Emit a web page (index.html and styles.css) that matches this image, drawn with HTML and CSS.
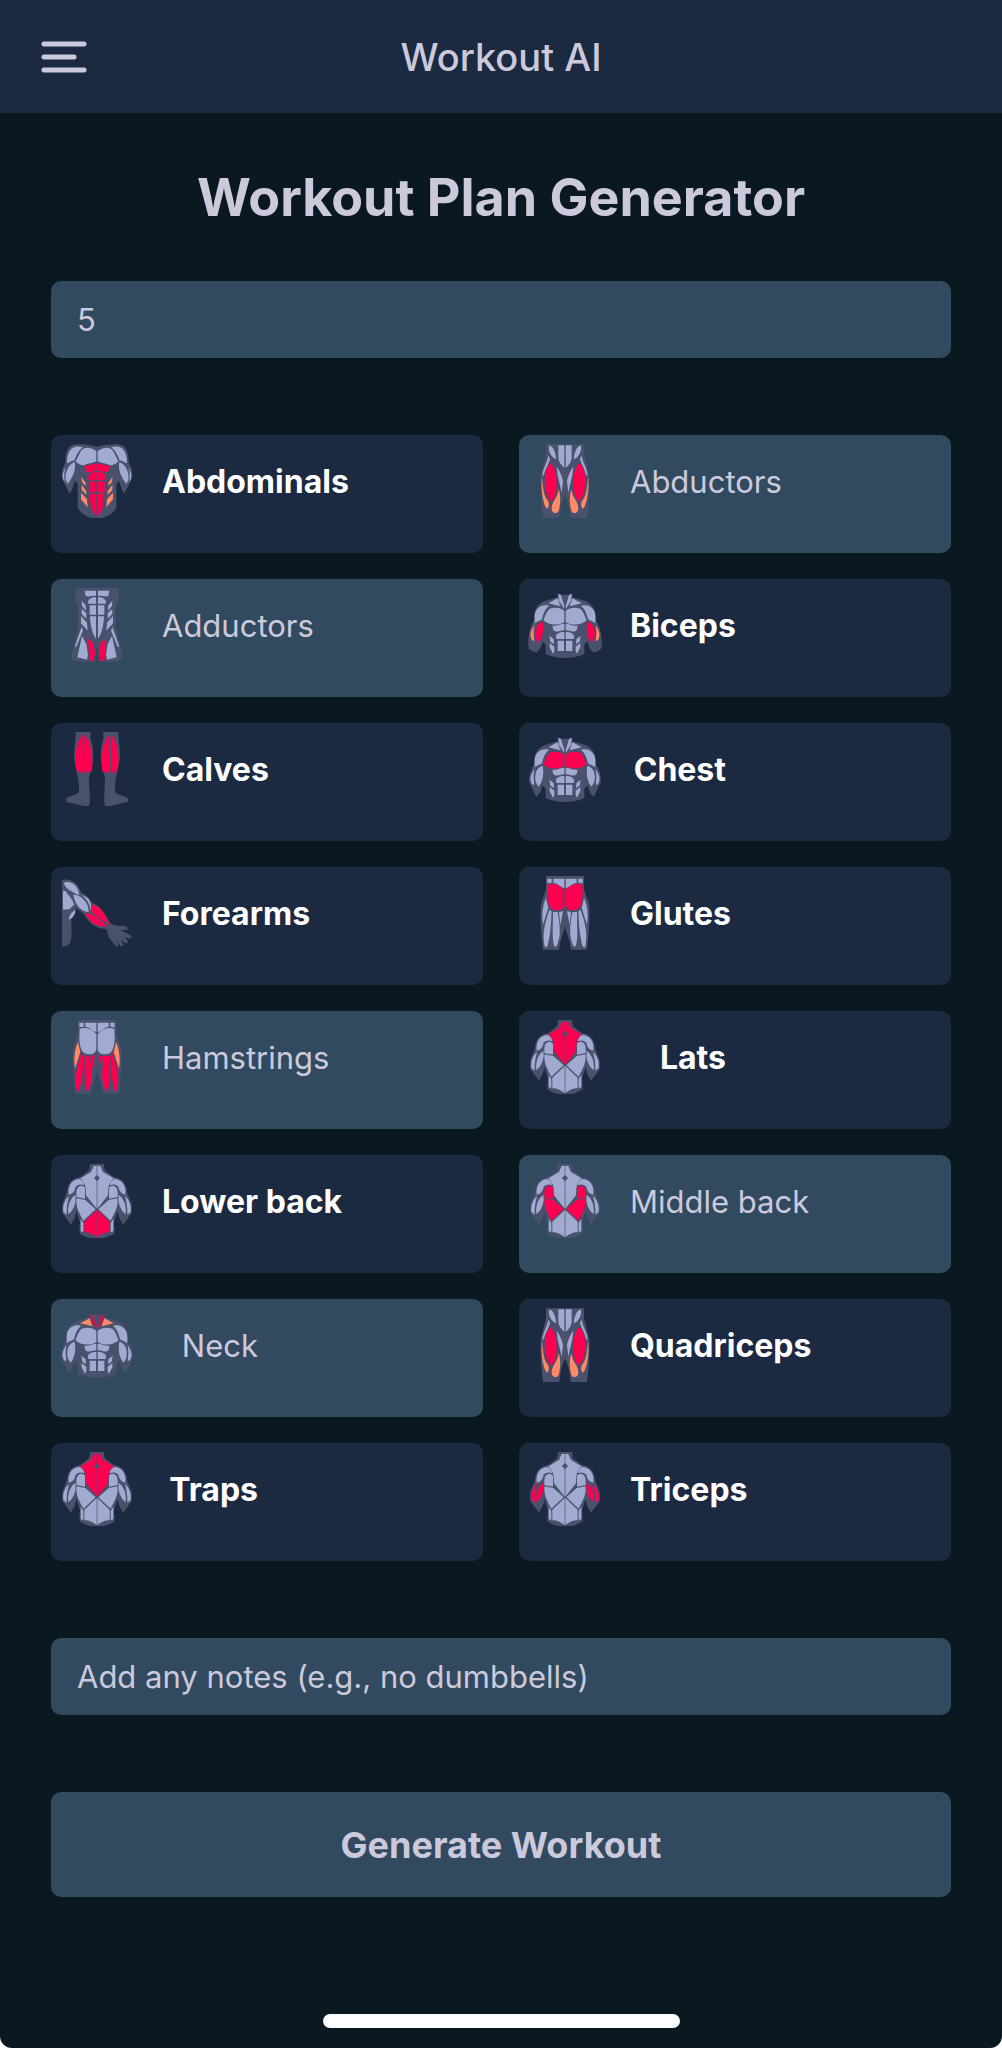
FILE: index.html
```html
<!DOCTYPE html>
<html lang="en">
<head>
<meta charset="utf-8">
<meta name="viewport" content="width=device-width, initial-scale=1">
<title>Workout AI</title>
<link rel="stylesheet" href="styles.css">
</head>
<body>
<svg class="sprite" width="0" height="0" aria-hidden="true">
  <defs>
    <!-- Each figure is drawn as its right half and mirrored. -->
    <g id="front-half">
      <path class="base" d="M0 20 L16 20 L23 14 L21 27 L50 36 C78 42 94 60 93 98 C106 118 110 138 106 154 L86 195 L74 180 L68 160 L58 170 V199 Q30 210 0 210Z"/>
      <path class="base arm" d="M68 110 L100 116 C112 140 112 170 108 184 L92 193 L76 184 L66 160Z"/>
      <path class="neck" d="M20 18 L12 21 L2 54 L3 62 L18 38Z"/>
      <path class="shoulder" d="M22 31 L50 46 L14 55Z"/>
      <path class="pec" d="M2 70 C8 60 28 56 46 62 C57 72 60 86 65 97 C50 112 20 114 2 102Z"/>
      <path class="delt" d="M48 53 C75 46 91 65 91 85 V106 C84 100 74 98 69 94 C65 76 60 64 48 53Z"/>
      <path class="biceps" d="M67 101 C84 106 93 122 88 150 L80 164 C68 152 62 126 67 101Z"/>
      <path class="brachialis" d="M91 110 C106 130 107 146 97 158 L92 158 C95 138 95 124 91 110Z"/>
      <path class="abs" d="M2 107 C14 107 24 116 38 113 L35 126 C24 136 12 126 2 127Z M2 132 C12 130 26 137 27 143 L26 153 H2Z M3 158 H22 V189 H3Z"/>
      <path class="oblique" d="M34 154 L47 143 L44 161 L33 168Z M32 176 L46 165 V178 L36 197 L32 190Z"/>
    </g>
    <g id="front"><use href="#front-half"/><use href="#front-half" transform="scale(-1 1)"/></g>

    <g id="abdomen-half">
      <path class="base" d="M0 8 C30 0 60 -2 78 5 C94 15 95 40 95 55 C108 80 108 100 101 112 L82 149 L74 135 L66 110 L58 120 L58 190 C50 212 20 224 0 224Z"/>
      <path class="pec" d="M2 22 C16 10 36 8 46 18 C54 28 58 42 64 52 C56 62 44 66 36 62 C26 58 14 58 2 52Z"/>
      <path class="delt" d="M42 10 C74 0 91 20 90 58 C80 54 74 48 68 50 C62 34 56 20 42 10Z"/>
      <path class="biceps" d="M67 55 C84 58 98 86 94 108 L88 120 C74 100 62 80 67 55Z"/>
      <path class="brachialis" d="M94 70 C106 88 105 104 97 114 C99 98 99 84 94 70Z"/>
      <path class="abs" d="M1 58 C14 60 26 66 38 66 L34 82 C24 90 12 80 1 80Z M1 84 C12 82 26 90 26 96 L25 108 H1Z M2 112 H23 V145 H2Z M2 149 H22 C22 180 14 208 2 215Z"/>
      <path class="oblique" d="M34 116 L47 98 L45 114 L34 126Z M32 142 L46 122 V138 L32 152Z M30 166 L48 146 V166 L28 190Z"/>
    </g>
    <g id="abdomen"><use href="#abdomen-half"/><use href="#abdomen-half" transform="scale(-1 1)"/></g>

    <g id="back-half">
      <path class="base" d="M0 0 H21 L23 18 L48 38 C75 42 90 60 90 85 L104 120 V148 L78 182 L66 160 L62 140 L51 175 L53 207 C40 218 20 224 0 224Z"/>
      <path class="traps" d="M1 5 L10 6 L18 24 L50 43 C42 50 36 60 34 72 L33 94 L1 134Z"/>
      <path class="delt" d="M52 45 C74 46 88 62 85 92 C76 90 68 86 64 68 C56 60 46 60 38 64 C40 52 46 48 52 45Z"/>
      <path class="rear" d="M36 71 C44 60 60 64 62 84 V99 L36 104Z"/>
      <path class="lats" d="M35 108 L61 103 C66 125 52 150 41 170 L4 136Z"/>
      <path class="triceps" d="M65 93 C76 100 90 120 86 150 C78 146 60 124 65 93Z M84 96 C96 106 104 124 101 144 L91 152 C92 130 88 112 84 96Z"/>
      <path class="lower" d="M1 138 L38 173 V205 C26 204 14 210 1 219Z"/>
      <path class="flank" d="M41 177 L49 164 V202 L41 204Z"/>
      <path class="base" d="M0 33 L9 42 L0 52Z"/>
    </g>
    <g id="back"><use href="#back-half"/><use href="#back-half" transform="scale(-1 1)"/></g>

    <g id="thigh-half">
      <path class="base" d="M0 1 H57 V30 L73 95 C75 140 71 180 66 222 H17 C14 190 8 165 0 152Z"/>
      <path class="hip" d="M2 4 H20 V38 C20 54 12 62 2 71Z M47 4 C52 20 42 40 27 46 C26 30 34 8 47 4Z M50 34 C52 56 66 70 68 96 L63 92 C58 70 46 55 45 44Z M25 68 L22 94 L10 146 L6 112 C10 88 20 76 25 68Z"/>
      <path class="quad" d="M43 57 C56 68 62 90 60 120 C58 150 50 162 43 172 C32 168 24 144 25 112 C26 82 34 66 43 57Z"/>
      <path class="vastus" d="M19 136 C22 162 40 172 40 194 C40 210 21 212 18 198 C12 170 14 150 19 136Z M70 98 C72 140 66 180 55 194 C46 190 46 176 55 165 C66 150 66 120 70 98Z"/>
    </g>
    <g id="thighs"><use href="#thigh-half"/><use href="#thigh-half" transform="scale(-1 1)"/></g>

    <g id="groin-half">
      <path class="base" d="M0 0 H65 V40 L56 60 V118 L76 200 L73 216 L40 222 L8 220 L0 172Z"/>
      <path class="abs" d="M3 8 H37 L34 24 C24 28 12 22 3 24Z M3 28 C12 26 26 32 27 42 L26 47 H3Z M3 52 H22 V80 H3Z M3 85 H21 C20 118 12 140 3 152Z"/>
      <path class="oblique" d="M34 52 L46 38 L45 54 L33 68Z M32 76 L46 62 V78 L32 92Z M30 104 L48 84 V106 L28 128Z M46 116 L67 176 L62 176 L42 128Z"/>
      <path class="adductor" d="M27 152 L25 185 L22 218 L10 220 L6 196 L11 166Z"/>
      <path class="outer" d="M45 144 L59 208 L30 215 L27 200 L32 168Z"/>
    </g>
    <g id="groin"><use href="#groin-half"/><use href="#groin-half" transform="scale(-1 1)"/></g>

    <g id="calf-half">
      <path class="base" d="M18 0 H64 C62 20 71 50 68 80 C65 112 52 140 54 180 C62 190 90 194 93 200 V209 L40 222 H26 Q20 220 22 190 L24 134 C8 90 8 50 20 20Z"/>
      <path class="calf" d="M38 8 C16 26 10 85 16 120 L24 116 L30 126 L39 116Z M43 8 C64 28 70 85 60 120 L52 116 L47 126 L41 116Z"/>
    </g>
    <g id="calves"><use href="#calf-half"/><use href="#calf-half" transform="scale(-1 1)"/></g>

    <g id="seat-half">
      <path class="base" d="M0 0 H57 V40 L72 84 C76 130 70 180 66 221 H18 C14 190 6 175 0 150Z"/>
      <path class="waist" d="M2 8 H35 V20 C20 22 14 34 2 36Z M40 8 H53 V22 L40 20Z"/>
      <path class="glute" d="M2 42 C18 24 36 22 52 26 L53 60 C50 86 46 103 24 103 C8 103 2 94 2 86Z"/>
      <path class="ham" d="M6 106 L18 108 L14 146Z M22 108 H36 L37 170 C36 212 30 218 24 208 C12 180 14 150 22 108Z M40 106 L47 102 C60 140 68 170 62 206 C60 216 54 216 52 208 C42 170 42 140 40 106Z"/>
      <path class="band" d="M50 96 L57 66 C68 90 70 120 66 146Z"/>
    </g>
    <g id="seat"><use href="#seat-half"/><use href="#seat-half" transform="scale(-1 1)"/></g>

    <g id="forearm">
      <path class="base" d="M6 12 C35 5 55 25 64 50 C82 58 92 70 96 80 C125 88 138 122 152 143 C166 150 178 150 196 150 Q206 154 202 162 L180 162 L212 178 Q218 186 208 188 L194 182 L204 196 Q204 206 194 200 L182 190 L190 206 Q188 216 180 208 L168 192 L176 208 Q172 216 164 206 L146 184 L140 160 C110 158 86 142 72 114 L48 96 L34 130 C34 160 38 190 28 204 Q20 212 6 212Z"/>
      <path class="muscle" d="M11 20 C36 12 56 32 58 58 C46 50 18 44 11 20Z M9 45 L17 45 C26 62 38 66 42 86 L28 100 L9 101Z M40 56 C62 56 88 78 86 108 C68 108 46 92 40 56Z M64 58 C88 62 98 84 92 104 C90 84 80 68 64 58Z M46 102 C48 115 36 130 26 131 C28 116 36 108 46 102Z"/>
      <path class="hot" d="M96 86 C120 86 140 122 148 146 C134 136 114 126 92 106Z M77 113 C98 108 116 130 144 151 C112 154 90 142 77 113Z"/>
    </g>
  </defs>
</svg>

<div class="app">
  <header class="topbar">
    <button class="menu" type="button" aria-label="Open menu">
      <svg viewBox="0 0 46 32" width="46" height="32" fill="none" stroke="currentColor" stroke-width="5" stroke-linecap="round"><path d="M3 3H43M3 16H33M3 29H43"/></svg>
    </button>
    <p class="brand">Workout AI</p>
  </header>

  <main class="content">
    <h1 class="title">Workout Plan Generator</h1>
    <form class="form">
      <input class="field" type="text" inputmode="numeric" value="5" aria-label="Number of exercises">

      <div class="muscles" role="group" aria-label="Muscle groups">
        <button class="card on" type="button" aria-pressed="true"><svg class="icon hit-abs" viewBox="-111 0 222 222"><use href="#abdomen"/></svg><span class="name">Abdominals</span></button>
        <button class="card" type="button" aria-pressed="false"><svg class="icon hit-quads" viewBox="-111 0 222 222"><use href="#thighs"/></svg><span class="name">Abductors</span></button>
        <button class="card" type="button" aria-pressed="false"><svg class="icon hit-adductors" viewBox="-111 0 222 222"><use href="#groin"/></svg><span class="name">Adductors</span></button>
        <button class="card on" type="button" aria-pressed="true"><svg class="icon hit-biceps" viewBox="-111 0 222 222"><use href="#front"/></svg><span class="name">Biceps</span></button>
        <button class="card on" type="button" aria-pressed="true"><svg class="icon hit-calves" viewBox="-111 0 222 222"><use href="#calves"/></svg><span class="name">Calves</span></button>
        <button class="card on" type="button" aria-pressed="true"><svg class="icon hit-chest" viewBox="-111 0 222 222"><use href="#front"/></svg><span class="name">Chest</span></button>
        <button class="card on" type="button" aria-pressed="true"><svg class="icon" viewBox="0 0 222 222"><use href="#forearm"/></svg><span class="name">Forearms</span></button>
        <button class="card on" type="button" aria-pressed="true"><svg class="icon hit-glutes" viewBox="-111 0 222 222"><use href="#seat"/></svg><span class="name">Glutes</span></button>
        <button class="card" type="button" aria-pressed="false"><svg class="icon hit-hamstrings" viewBox="-111 0 222 222"><use href="#seat"/></svg><span class="name">Hamstrings</span></button>
        <button class="card on" type="button" aria-pressed="true"><svg class="icon hit-traps" viewBox="-111 0 222 222"><use href="#back"/></svg><span class="name">Lats</span></button>
        <button class="card on" type="button" aria-pressed="true"><svg class="icon hit-lower" viewBox="-111 0 222 222"><use href="#back"/></svg><span class="name">Lower back</span></button>
        <button class="card" type="button" aria-pressed="false"><svg class="icon hit-middle" viewBox="-111 0 222 222"><use href="#back"/></svg><span class="name">Middle back</span></button>
        <button class="card" type="button" aria-pressed="false"><svg class="icon hit-neck" viewBox="-111 0 222 222"><use href="#front"/></svg><span class="name">Neck</span></button>
        <button class="card on" type="button" aria-pressed="true"><svg class="icon hit-quads" viewBox="-111 0 222 222"><use href="#thighs"/></svg><span class="name">Quadriceps</span></button>
        <button class="card on" type="button" aria-pressed="true"><svg class="icon hit-traps" viewBox="-111 0 222 222"><use href="#back"/></svg><span class="name">Traps</span></button>
        <button class="card on" type="button" aria-pressed="true"><svg class="icon hit-triceps" viewBox="-111 0 222 222"><use href="#back"/></svg><span class="name">Triceps</span></button>
      </div>

      <input class="field" type="text" placeholder="Add any notes (e.g., no dumbbells)" aria-label="Notes">
      <button class="submit" type="submit">Generate Workout</button>
    </form>
  </main>
  <div class="home-indicator"></div>
</div>
</body>
</html>
```
FILE: styles.css
```css
:root {
  --bg: #0a1820;
  --navy: #1b2a41;
  --slate: #324a5f;
  --text: #ccc9dc;
  --muscle: #a1abd1;
  --base: #4a516c;
  --hot: #ff0051;
  --warm: #ff8a65;
}

* { box-sizing: border-box; }

html { background: #fff; }

body {
  margin: 0;
  font-family: Inter, "Liberation Sans", sans-serif;
  font-size: 31px;
  color: var(--text);
}

button, input { font: inherit; color: inherit; border: 0; }
button { cursor: pointer; }

.sprite { position: absolute; }

.app {
  display: flex;
  flex-direction: column;
  min-height: 100vh;
  padding-bottom: 20px;
  background: var(--bg);
  border-radius: 0 0 12px 12px;
}

.topbar {
  display: grid;
  grid-template-columns: 1fr auto 1fr;
  align-items: center;
  height: 113px;
  padding: 0 41px;
  background: var(--navy);
}

.menu {
  justify-self: start;
  display: flex;
  padding: 0;
  background: none;
}

.brand {
  margin: 0;
  font-size: 38px;
  font-weight: 500;
}

.content { padding: 53px 51px 77px; }

.title {
  margin: 0 0 51px;
  font-size: 52px;
  line-height: 64px;
  font-weight: 700;
  text-align: center;
}

.form {
  display: flex;
  flex-direction: column;
  gap: 77px;
}

.field {
  width: 100%;
  height: 77px;
  padding: 0 26px;
  border-radius: 10px;
  background: var(--slate);
}

.field::placeholder { color: inherit; opacity: 1; }

.muscles {
  display: grid;
  grid-template-columns: 1fr 1fr;
  gap: 26px 36px;
}

.card {
  display: flex;
  align-items: center;
  gap: 28px;
  padding: 9px 9px 35px;
  border-radius: 10px;
  background: var(--slate);
}

.card.on {
  background: var(--navy);
  color: #fff;
  font-size: 32px;
  font-weight: 700;
}

.icon { flex: none; width: 74px; height: 74px; }

.name { min-width: 96px; text-align: right; }

.submit {
  height: 105px;
  border-radius: 10px;
  background: var(--slate);
  font-size: 36px;
  font-weight: 700;
}

.home-indicator {
  width: 357px;
  height: 14px;
  margin: auto auto 0;
  border-radius: 7px;
  background: #fff;
}

/* Muscle figures: every part is neutral until its icon highlights it. */
.icon { fill: var(--muscle); }
.base { fill: var(--base); }
.hot { fill: var(--hot); }
.arm { display: var(--arm, none); }
.neck { fill: var(--neck, var(--muscle)); }
.shoulder { fill: var(--shoulder, var(--muscle)); }
.pec { fill: var(--pec, var(--muscle)); }
.biceps { fill: var(--biceps, var(--muscle)); }
.brachialis { fill: var(--brachialis, var(--muscle)); }
.abs { fill: var(--abs, var(--muscle)); }
.oblique { fill: var(--oblique, var(--muscle)); }
.traps { fill: var(--traps, var(--muscle)); }
.rear, .lats { fill: var(--middle, var(--muscle)); }
.triceps { fill: var(--triceps, var(--muscle)); }
.lower { fill: var(--lower, var(--muscle)); }
.quad { fill: var(--quad, var(--muscle)); }
.vastus { fill: var(--vastus, var(--muscle)); }
.adductor { fill: var(--adductor, var(--muscle)); }
.calf { fill: var(--calf, var(--muscle)); }
.glute { fill: var(--glute, var(--muscle)); }
.ham { fill: var(--ham, var(--muscle)); }
.band { fill: var(--band, var(--muscle)); }

.hit-abs { --abs: var(--hot); --oblique: var(--warm); }
.hit-quads { --quad: var(--hot); --vastus: var(--warm); }
.hit-adductors { --adductor: var(--hot); }
.hit-biceps { --biceps: var(--hot); --brachialis: var(--warm); --arm: inline; }
.hit-calves { --calf: var(--hot); }
.hit-chest { --pec: var(--hot); }
.hit-glutes { --glute: var(--hot); }
.hit-hamstrings { --ham: var(--hot); --band: var(--warm); }
.hit-traps { --traps: var(--hot); }
.hit-lower { --lower: var(--hot); }
.hit-middle { --middle: var(--hot); }
.hit-neck { --neck: #c4164f; --shoulder: var(--warm); }
.hit-triceps { --triceps: var(--hot); }
```
